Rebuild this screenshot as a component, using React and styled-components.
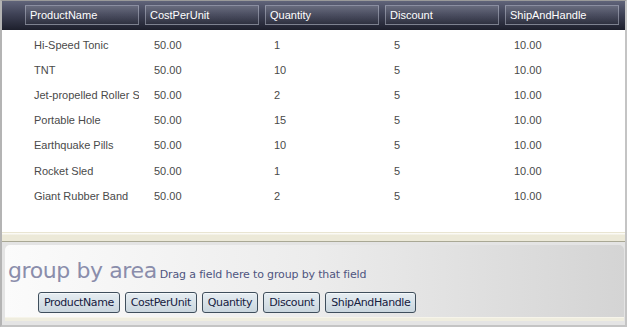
import styled, {createGlobalStyle} from "styled-components";

const GlobalStyle = createGlobalStyle`
  html, body {
    margin: 0;
    padding: 0;
    background: #ffffff;
  }
  body {
    font-family: "Liberation Sans", Arial, sans-serif;
  }
`;

const columns = ["ProductName", "CostPerUnit", "Quantity", "Discount", "ShipAndHandle"];

const rows = [
    ["Hi-Speed Tonic", "50.00", "1", "5", "10.00"],
    ["TNT", "50.00", "10", "5", "10.00"],
    ["Jet-propelled Roller Skates", "50.00", "2", "5", "10.00"],
    ["Portable Hole", "50.00", "15", "5", "10.00"],
    ["Earthquake Pills", "50.00", "10", "5", "10.00"],
    ["Rocket Sled", "50.00", "1", "5", "10.00"],
    ["Giant Rubber Band", "50.00", "2", "5", "10.00"],
];

const Frame = styled.div`
  width: 627px;
  height: 327px;
  box-sizing: border-box;
  border-top: 1px solid #9a9a9a;
  border-left: 2px solid #b4b4b4;
  border-right: 2px solid #c4c4c4;
  border-bottom: 2px solid #c4c4c4;
  display: flex;
  flex-direction: column;
  overflow: hidden;
`;

const Header = styled.div`
  height: 29px;
  flex-shrink: 0;
  display: flex;
  gap: 6px;
  padding: 4px 0 0 23px;
  box-sizing: border-box;
  background: linear-gradient(#60647a 0%, #3f4256 45%, #1d1f2c 100%);
`;

const HeaderCell = styled.div`
  width: 114px;
  height: 20px;
  box-sizing: border-box;
  border: 1px solid rgba(200, 205, 220, 0.45);
  background: linear-gradient(rgba(255, 255, 255, 0.12), rgba(255, 255, 255, 0.02));
  color: #ffffff;
  font-size: 11px;
  line-height: 18px;
  padding-left: 4px;
  white-space: nowrap;
  overflow: hidden;
`;

const Body = styled.div`
  height: 202px;
  flex-shrink: 0;
  background: #ffffff;
  padding-top: 2px;
  box-sizing: border-box;
`;

const Row = styled.div`
  display: flex;
  gap: 6px;
  height: 25.2px;
  padding-left: 23px;
  align-items: center;
`;

const Cell = styled.div`
  width: 114px;
  box-sizing: border-box;
  padding-left: 9px;
  color: #4a4a4a;
  font-size: 11px;
  white-space: nowrap;
  overflow: hidden;
  text-overflow: clip;
`;

const Splitter = styled.div`
  height: 10px;
  flex-shrink: 0;
  box-sizing: border-box;
  border-top: 1px solid #e9e5d2;
  border-bottom: 1px solid #a9a895;
  background: linear-gradient(#fbfaf5 0px, #fbfaf5 1px, #ece9d8 2px, #ece9d8 100%);
`;

const GroupArea = styled.div`
  flex: 1;
  background: #e4e4e4;
  padding: 3px 1px 0 3px;
  display: flex;
  flex-direction: column;
`;

const GroupPanel = styled.div`
  height: 72px;
  border-radius: 5px 5px 0 0;
  background: linear-gradient(90deg, #fbfbfb 0%, #ececec 50%, #d4d4d4 100%);
  padding: 13px 0 0 3px;
  box-sizing: border-box;
`;

const GroupFoot = styled.div`
  height: 3px;
  background: #efeddf;
  border-top: 1px solid #f6f4ea;
`;

const Caption = styled.div`
  display: flex;
  align-items: baseline;
  gap: 3px;
  white-space: nowrap;
`;

const BigLabel = styled.span`
  font-family: "DejaVu Sans", Verdana, sans-serif;
  font-size: 22px;
  letter-spacing: -0.4px;
  color: #8a8dab;
`;

const Hint = styled.span`
  font-family: "DejaVu Sans", Verdana, sans-serif;
  font-size: 11px;
  letter-spacing: -0.15px;
  color: #4f5580;
`;

const Buttons = styled.div`
  display: flex;
  gap: 5px;
  margin: 9px 0 0 30px;
`;

const FieldButton = styled.div`
  height: 21px;
  box-sizing: border-box;
  padding: 0 5px;
  border: 1px solid #3f4e5c;
  border-radius: 3px;
  background: linear-gradient(#e6edf2, #cad6de);
  box-shadow: inset 0 1px 0 #f4f8fa;
  color: #16203e;
  font-family: "DejaVu Sans", Verdana, sans-serif;
  font-size: 11px;
  letter-spacing: -0.4px;
  line-height: 19px;
  white-space: nowrap;
`;

const App = () => {
    return (
        <>
            <GlobalStyle/>
            <Frame>
                <Header>
                    {columns.map((c) => (
                        <HeaderCell key={c}>{c}</HeaderCell>
                    ))}
                </Header>
                <Body>
                    {rows.map((r) => (
                        <Row key={r[0]}>
                            {r.map((v, i) => (
                                <Cell key={i}>{v}</Cell>
                            ))}
                        </Row>
                    ))}
                </Body>
                <Splitter/>
                <GroupArea>
                    <GroupPanel>
                        <Caption>
                            <BigLabel>group by area</BigLabel>
                            <Hint>Drag a field here to group by that field</Hint>
                        </Caption>
                        <Buttons>
                            {columns.map((c) => (
                                <FieldButton key={c}>{c}</FieldButton>
                            ))}
                        </Buttons>
                    </GroupPanel>
                    <GroupFoot/>
                </GroupArea>
            </Frame>
        </>
    );
};

export default App;
